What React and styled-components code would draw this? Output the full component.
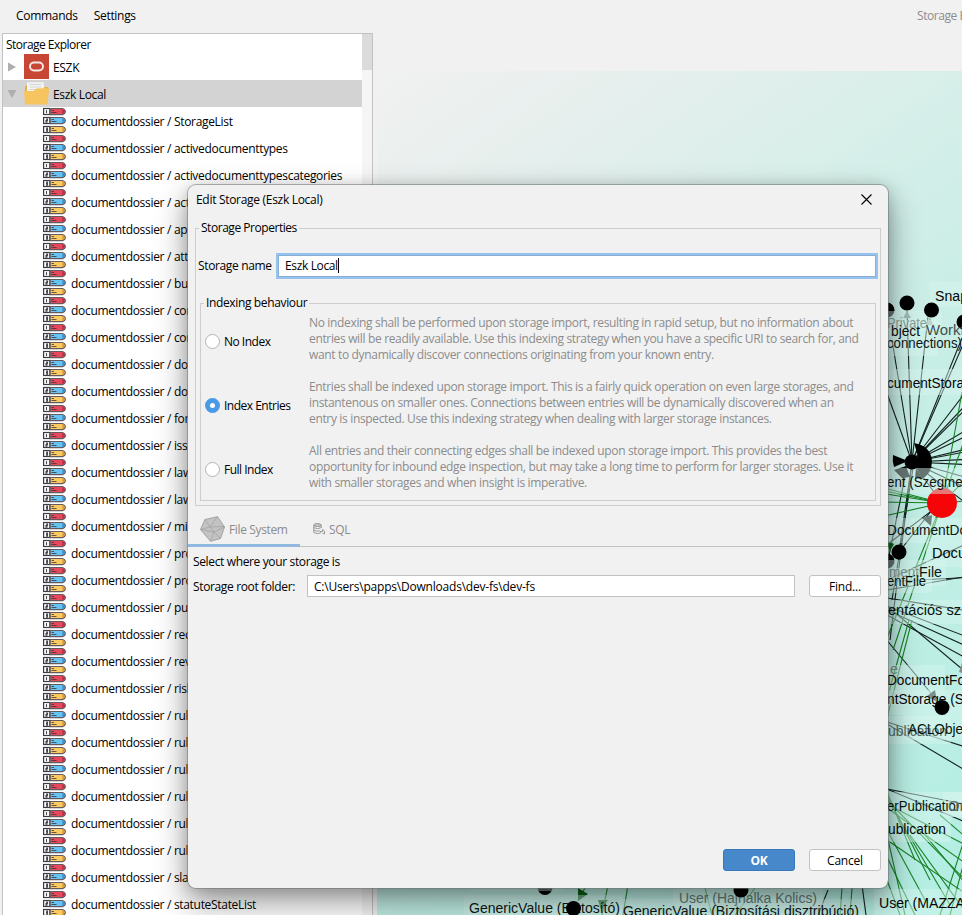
import React from 'react';
import styled, { createGlobalStyle } from 'styled-components';

const Global = createGlobalStyle`
  * { box-sizing: border-box; }
  body { margin: 0; background: #f1f1f1; overflow: hidden; }
`;

const Page = styled.div`
  position: relative;
  width: 962px;
  height: 915px;
  overflow: hidden;
  display: flex;
  flex-direction: column;
  background: #f1f1f1;
  color: #000;
  font: 12px/16px 'Open Sans', 'Noto Sans', sans-serif;
  letter-spacing: -0.36px;
  white-space: nowrap;
`;

const MenuBar = styled.header`
  height: 33px;
  flex: none;
  display: flex;
  align-items: center;
  gap: 16px;
  padding: 0 0 1px 16px;
  letter-spacing: -0.3px;
`;
const MenuItem = styled.span``;
const MenuTitle = styled.span`
  width: 45px;
  margin-left: auto;
  overflow: hidden;
  color: #8c8c8c;
  letter-spacing: -0.45px;
`;

const Workspace = styled.div`
  flex: 1;
  min-height: 0;
  display: flex;
`;
const Explorer = styled.aside`
  width: 371px;
  margin-left: 2px;
  display: flex;
  border: 1px solid #c2c2c2;
  border-bottom: 0;
  background: #fff;
  overflow: hidden;
`;
const Tree = styled.div`
  flex: 1;
  min-width: 0;
`;
const TreeHeader = styled.div`
  height: 19px;
  padding: 3px 0 0 3px;
  letter-spacing: -0.52px;
`;
const Row = styled.div`
  height: 27px;
  display: flex;
  align-items: center;
  padding-left: ${(p) => (p.$child ? 40 : 4)}px;
  gap: ${(p) => (p.$child ? 5 : 4)}px;
  background: ${(p) => (p.$selected ? '#d3d3d3' : 'transparent')};
  letter-spacing: ${(p) => (p.$child ? -0.31 : -0.33)}px;
  svg { flex: none; }
`;
const RowLabel = styled.span`
  padding-top: 2px;
`;
const Arrow = styled.svg`
  margin-right: 3px;
`;
const ScrollTrack = styled.div`
  width: 10px;
  background: #f5f5f5;
`;
const ScrollThumb = styled.div`
  height: 36px;
  background: #dbdbdb;
`;
const GraphPane = styled.main`
  flex: 1;
  min-width: 0;
  margin: 38px 0 0 4px;
  background: linear-gradient(145deg, #f1f1f1 0%, #e6efed 15%, #c9eee6 50%, #b2eee3 100%);
  overflow: hidden;
  svg { display: block; }
`;

const Dialog = styled.section`
  position: absolute;
  left: 187px;
  top: 184px;
  width: 702px;
  height: 705px;
  display: flex;
  flex-direction: column;
  background: #f1f1f1;
  background-clip: padding-box;
  border: 1px solid rgba(110, 120, 118, 0.55);
  border-radius: 9px;
  box-shadow: 0 14px 32px rgba(0, 0, 0, 0.4), 0 2px 14px rgba(0, 0, 0, 0.14);
`;
const TitleBar = styled.div`
  height: 30px;
  display: flex;
  justify-content: space-between;
  align-items: center;
  padding: 0 16px 0 8px;
  letter-spacing: -0.3px;
  svg { margin-top: -2px; }
`;
const Fieldset = styled.fieldset`
  min-width: 0;
  margin: ${(p) => (p.$inner ? '16px 0 0 0' : '5px 7px 0 7px')};
  height: ${(p) => (p.$inner ? 206 : 286)}px;
  padding: ${(p) => (p.$inner ? '0 4px' : '17px 4px 0 4px')};
  border: 1px solid #cdcdcd;
`;
const Legend = styled.legend`
  padding: 0 2px;
  margin-left: -1px;
  height: 16px;
  letter-spacing: ${(p) => (p.$inner ? -0.36 : -0.46)}px;
`;
const NameRow = styled.div`
  display: flex;
  align-items: center;
  justify-content: space-between;
  margin: 0 -2px 0 -2px;
`;
const NameInput = styled.div`
  width: 602px;
  height: 26px;
  display: flex;
  align-items: center;
  padding: 0 0 0 7px;
  background: #fff;
  border: 2px solid #97c3f0;
  outline: 1px solid #89b0d4;
  outline-offset: -3px;
  letter-spacing: -0.36px;
`;
const Caret = styled.span`
  width: 1px;
  height: 15px;
  margin-top: -1px;
  background: #000;
`;
const Options = styled.div`
  margin-top: -2px;
`;
const Option = styled.div`
  height: 64px;
  display: grid;
  grid-template-columns: 19px 85px 1fr;
  align-items: center;
  letter-spacing: -0.5px;
`;
const OptionLabel = styled.span`
  padding-top: 2px;
`;
const Radio = styled.span`
  width: 15px;
  height: 15px;
  border-radius: 50%;
  background: #fff;
  border: ${(p) => (p.$on ? '5px solid #4a9ae6' : '1px solid #b3b3b3')};
`;
const Description = styled.p`
  margin: 0;
  height: 52px;
  color: #8c8c8c;
  letter-spacing: -0.34px;
`;
const Tabs = styled.nav`
  height: 42px;
  margin-top: -1px;
  display: flex;
  border-bottom: 1px solid #c2c2c2;
  color: #8c8c8c;
`;
const Tab = styled.div`
  width: ${(p) => p.$w}px;
  height: 42px;
  padding: 9px 0 0 12px;
  display: flex;
  align-items: center;
  gap: 4px;
  border-bottom: 3px solid ${(p) => (p.$active ? '#91b9e0' : 'transparent')};
`;
const TabLabel = styled.span`
  padding-top: 2px;
`;
const TabBody = styled.div`
  flex: 1;
  padding: 7px 7px 0 5px;
`;
const FolderRow = styled.div`
  display: flex;
  align-items: center;
  margin-top: 5px;
`;
const FolderLabel = styled.span`
  width: 114px;
  padding-top: 1px;
`;
const PathInput = styled.div`
  width: 488px;
  height: 22px;
  padding: 3px 6px 0;
  border: 1px solid #c2c2c2;
  background: #fff;
  margin-right: 14px;
  letter-spacing: -0.21px;
`;
const Button = styled.button`
  width: 72px;
  height: 22px;
  padding: 1px 0 0;
  border: 1px solid ${(p) => (p.$primary ? '#3878ba' : '#c2c2c2')};
  border-radius: 3px;
  background: ${(p) => (p.$primary ? '#4688ca' : '#fff')};
  color: ${(p) => (p.$primary ? '#fff' : '#000')};
  font: ${(p) => (p.$primary ? 700 : 400)} 12px/18px 'Open Sans', sans-serif;
  letter-spacing: -0.2px;
`;
const Footer = styled.footer`
  display: flex;
  justify-content: flex-end;
  gap: 14px;
  padding: 0 7px 17px 0;
`;

const PENS = [
  ['#e8485c', '#b93147', 'M3.500 2.500v3'],
  ['#66c3f2', '#3c90d2', 'M3 2.500h1.500v1.500H3v1.500h1.500'],
  ['#fbcb62', '#dc9a36', 'M3 2.500h1.500v3H3M3 4h1.500'],
];
const PenIcon = () => (
  <svg width="23" height="27" viewBox="0 0 23 27">
    {PENS.map(([fill, edge, digit], i) => (
      <g key={fill} transform={`translate(0 ${i * 9 + 0.6})`}>
        <rect x="0.600" y="0.900" width="6.200" height="6" fill="#fff" stroke="#3b3c43" strokeWidth="1.200" />
        <path d={digit} fill="none" stroke="#45464d" strokeWidth="1.100" />
        <path d="M7.200 .9h12.300q2.800 1 2.800 3.100t-2.800 3H7.200z" fill={fill} stroke="#665a5d" strokeWidth="1.200" />
        <path d="M19.300 1.400q2.600 1 2.600 2.600t-2.600 2.500z" fill={edge} />
        <path d="M8.500 2.900h2.500M8.500 4.900h5" stroke="#343238" strokeOpacity=".75" strokeWidth="1" />
      </g>
    ))}
  </svg>
);
const OracleIcon = () => (
  <svg width="25" height="25" viewBox="0 0 25 25">
    <path d="M0 0h25v25H0z" fill="#c74634" />
    <rect x="6" y="8.500" width="13" height="8" rx="4" fill="none" stroke="#f8e9e6" strokeWidth="1.900" />
  </svg>
);
const FolderIcon = () => (
  <svg width="25" height="25" viewBox="0 0 25 25">
    <path d="M1 6q0-1.500 1.500-1.500H8v6H1z" fill="#e7b144" />
    <path d="M20 6h3q1.500 0 1.500 1.500V12H18z" fill="#e7b144" />
    <path d="M3 2q0-.8.8-.8H19q.8 0 .8.8v11H3z" fill="#f4f4f4" />
    <path d="M5.500 3.500h12M5.500 6h12M5.500 8.500h8" stroke="#d5d5d5" />
    <path d="M0 10.700q0-.8.8-.8h8.700l3.500-2.700H24q1 0 .9 1L23.800 22q-.2 1.500-1.700 1.500H2.500Q1 23.500.8 22z" fill="#f7c55f" />
  </svg>
);
const CubeIcon = () => (
  <svg width="25" height="26" viewBox="0 0 25 26">
    <path d="M5 3.500L17.500.7 24.500 11l-4 11.500-10 2.800L.5 13.500z" fill="#c3c3c3" stroke="#a2a2a2" strokeLinejoin="round" />
    <path d="M5 3.500L10 11l14.500-.5M17.500.7L10 11M.5 13.500L10 11l4 5 10.500-5M.5 13.500L14 16l6.500 6.500M14 16l-3.500 9" fill="none" stroke="#a2a2a2" strokeWidth=".8" />
  </svg>
);
const SqlIcon = () => (
  <svg width="13" height="12" viewBox="-1 0 13 12" fill="none" stroke="#999">
    <ellipse cx="4.500" cy="2" rx="3.700" ry="1.500" fill="#c8c8c8" />
    <path d="M.8 2v7.500q3.700 2.500 7.400 0M8.200 2v3M.8 4.600q3.700 2.200 7.400 0M.8 7q3 2 6 .8" />
    <path d="M7 8.500h2.500v-2l2 1.500v3l-2-.8" />
  </svg>
);
const Disclosure = ({ open }) => (
  <Arrow width="10" height="10" viewBox="0 0 10 10">
    <path d={open ? 'M.5 1h9L5 9z' : 'M1 .5L9 5 1 9.500z'} fill="#afafaf" />
  </Arrow>
);

const ENTRIES = [
  'StorageList', 'activedocumenttypes', 'activedocumenttypescategories', 'act', 'app', 'att', 'bus',
  'con', 'con', 'doc', 'doc', 'form', 'iss', 'law', 'law', 'min', 'pro', 'pro', 'pub', 'rec', 'rev',
  'risk', 'rul', 'rul', 'rul', 'rul', 'rul', 'rul', 'sla', 'statuteStateList',
];

const BLACK_EDGES = [
  [912, 462, 888, 396], [888, 396, 870, 345], [912, 462, 892, 340], [912, 462, 907, 311], [912, 462, 928, 316],
  [912, 462, 962, 338], [912, 462, 965, 340], [912, 462, 975, 380], [912, 462, 975, 395], [912, 462, 975, 400],
  [912, 462, 975, 425], [912, 462, 975, 432], [912, 462, 975, 447], [912, 462, 975, 450], [912, 462, 975, 459],
  [912, 462, 975, 465], [912, 462, 975, 480], [912, 462, 975, 492], [912, 462, 975, 510], [912, 462, 942, 503],
  [912, 462, 899, 552], [912, 462, 890, 640], [914, 462, 892, 600], [908, 462, 880, 600], [880, 550, 942, 503],
  [899, 552, 932, 510], [887, 590, 975, 575], [880, 582, 975, 577], [887, 598, 975, 612], [887, 606, 975, 640],
  [887, 615, 975, 663], [887, 610, 975, 650], [880, 632, 935, 698], [880, 600, 975, 680], [887, 722, 975, 750],
  [887, 724, 975, 776], [887, 789, 975, 806], [887, 789, 975, 826], [887, 580, 975, 540], [887, 476, 870, 490],
  [862, 885, 866, 915], [828, 890, 818, 915],
];
const GREEN_EDGES = [
  [962, 392, 942, 503], [975, 410, 942, 503], [975, 500, 942, 503], [880, 487, 942, 503], [880, 490, 942, 503],
  [880, 493, 942, 503], [880, 502, 942, 503], [880, 517, 942, 503], [942, 503, 885, 643], [942, 503, 893, 650],
  [942, 503, 975, 470], [912, 620, 887, 718], [909, 620, 885, 706], [887, 792, 915, 860],
  [887, 795, 930, 880], [887, 798, 950, 905], [887, 800, 975, 890], [887, 804, 975, 850], [887, 808, 975, 870],
  [887, 830, 925, 900], [887, 840, 975, 900], [975, 806, 940, 915], [975, 820, 950, 915], [887, 835, 905, 915],
  [887, 857, 915, 915], [887, 880, 900, 915], [910, 835, 975, 925], [940, 815, 975, 845], [925, 835, 975, 895],
  [608, 885, 602, 915], [628, 885, 623, 915], [705, 888, 712, 915], [755, 888, 735, 915], [842, 888, 840, 915],
  [852, 888, 850, 915], [585, 888, 578, 900],
];
const PLATES = [
  [930, 282, 60, 25], [880, 311, 62, 20], [880, 320, 58, 36], [880, 369, 90, 26], [880, 468, 90, 26],
  [880, 518, 90, 25], [926, 542, 50, 25], [880, 560, 66, 26], [880, 568, 52, 25], [880, 600, 90, 24],
  [870, 665, 75, 40], [880, 690, 90, 25], [903, 715, 60, 25], [875, 716, 76, 28], [880, 792, 95, 25],
  [943, 792, 32, 25], [880, 817, 71, 25], [874, 889, 100, 26], [464, 895, 158, 26], [619, 899, 244, 26],
  [673, 888, 150, 20], [470, 882, 95, 9], [960, 127, 20, 27],
];
const LABELS = [
  ['Snap', 935, 301, '#050505', 33], ['Private', 887, 328, '#8a9f9b', 40], ['bject', 891, 336, '#0a0a0a', 29],
  ['Workfl', 926, 335, '#43514e', 42], ['connections)', 887, 348, '#101514', 75], ['cumentStora', 887, 388, '#050505', 77],
  ['ent (Szegmen', 887, 487, '#101513', 83], ['DocumentDo', 887, 535, '#101513', 80], ['Docu', 932, 558, '#050505', 34],
  ['ment', 889, 577, '#7d9991', 30], ['File', 919, 577, '#101513', 23], ['entFile', 887, 586, '#07130b', 39],
  ['entációs sz', 888, 615, '#07130b', 73], ['e', 890, 674, '#788f89', 8], ['DocumentFo', 887, 685, '#050505', 78],
  ['ntStorage (S', 887, 704, '#050505', 77], ['ublication', 888, 736, '#536a65', 59], ['ACLObje', 908, 734, '#07130b', 55],
  ['erPublication', 887, 811, '#07130b', 76], ['On', 948, 811, '#5c716c', 20], ['ublication', 888, 834, '#050505', 58],
  ['User (MAZZA', 879, 908, '#050505', 86], ['GenericValue (Biztosító)', 469, 913, '#101513', 151],
  ['User (Hajnalka Kolics)', 679, 903, '#647b76', 138], ['GenericValue (Biztosítási disztribúció)', 623, 916, '#101513', 236],
];
const GraphText = styled.text`
  font: 14px 'Liberation Sans', Arial, sans-serif;
  letter-spacing: 0;
`;

const Graph = () => (
  <svg width="585" height="844" viewBox="377 71 585 844">
    <g stroke="#14201d" strokeWidth="1.100">
      {BLACK_EDGES.map(([a, b, c, d], i) => <line key={i} x1={a} y1={b} x2={c} y2={d} />)}
    </g>
    <g stroke="#158222" strokeWidth="1.100">
      {GREEN_EDGES.map(([a, b, c, d], i) => <line key={i} x1={a} y1={b} x2={c} y2={d} />)}
    </g>
    <path d="M914 443Q931 446 932 461Q932 473 922 479L917 468L918 456z" />
    <path d="M893 455l15 6-14 6q-2-6-1-12M894 470l12-4 4 11-8 1zM916 468l7 11-8-1z" />
    <path d="M907 311l4 7h-8zM930 317l3 8h-7z" fill="#71817d" />
    <path d="M885 540l9 4-4 7zM578 888l10 6-10 7zM598 900h10l-7 10z" fill="#096214" />
    <path d="M962 663l-3 9 6 2z" fill="#82918e" />
    <circle cx="942" cy="503" r="15" fill="#f50508" />
    {[[887, 310], [964, 322], [887, 561], [545, 887.5]].map(([x, y]) => (
      <circle key={`${x}-${y}`} cx={x} cy={y} r="7.500" />
    ))}
    {PLATES.map(([x, y, w, h], i) => (
      <rect key={i} x={x} y={y} width={w} height={h} rx="2" fill="#d5f5ef" fillOpacity=".48" />
    ))}
    <path d="M932 515l-1 11-9-8z" fill="#6f807b" />
    <path d="M937 702l-2-12-8 6z" fill="#7c8e89" />
    <circle cx="907" cy="303" r="7.500" />
    <circle cx="931.500" cy="310" r="7.500" />
    <circle cx="899" cy="552" r="7.500" />
    <circle cx="912" cy="462" r="7.500" />
    <circle cx="942" cy="707.500" r="7.500" />
    {LABELS.map(([t, x, y, fill, w], i) => (
      <GraphText key={i} x={x} y={y} fill={fill} textLength={w} lengthAdjust="spacingAndGlyphs">{t}</GraphText>
    ))}
    <circle cx="573.500" cy="908.500" r="7.500" />
    <circle cx="741" cy="890" r="7.500" />
  </svg>
);

const OPTIONS = [
  ['No Index', false, [
    'No indexing shall be performed upon storage import, resulting in rapid setup, but no information about',
    'entries will be readily available. Use this indexing strategy when you have a specific URI to search for, and',
    'want to dynamically discover connections originating from your known entry.']],
  ['Index Entries', true, [
    'Entries shall be indexed upon storage import. This is a fairly quick operation on even large storages, and',
    'instantenous on smaller ones. Connections between entries will be dynamically discovered when an',
    'entry is inspected. Use this indexing strategy when dealing with larger storage instances.']],
  ['Full Index', false, [
    'All entries and their connecting edges shall be indexed upon storage import. This provides the best',
    'opportunity for inbound edge inspection, but may take a long time to perform for larger storages. Use it',
    'with smaller storages and when insight is imperative.']],
];

export default function App() {
  return (
    <Page>
      <Global />
      <MenuBar>
        <MenuItem>Commands</MenuItem>
        <MenuItem>Settings</MenuItem>
        <MenuTitle>Storage Explorer</MenuTitle>
      </MenuBar>
      <Workspace>
        <Explorer>
          <Tree>
            <TreeHeader>Storage Explorer</TreeHeader>
            <Row><Disclosure /><OracleIcon /><RowLabel>ESZK</RowLabel></Row>
            <Row $selected><Disclosure open /><FolderIcon /><RowLabel>Eszk Local</RowLabel></Row>
            {ENTRIES.map((name, i) => (
              <Row key={i} $child><PenIcon /><RowLabel>documentdossier / {name}</RowLabel></Row>
            ))}
          </Tree>
          <ScrollTrack><ScrollThumb /></ScrollTrack>
        </Explorer>
        <GraphPane><Graph /></GraphPane>
      </Workspace>
      <Dialog>
        <TitleBar>
          Edit Storage (Eszk Local)
          <svg width="11" height="11" viewBox="0 0 11 11"><path d="M.5 .5l10 10M10.500 .5l-10 10" stroke="#000" strokeWidth="1.100" /></svg>
        </TitleBar>
        <Fieldset>
          <Legend>Storage Properties</Legend>
          <NameRow>
            Storage name
            <NameInput>Eszk Local<Caret /></NameInput>
          </NameRow>
          <Fieldset $inner>
            <Legend $inner>Indexing behaviour</Legend>
            <Options>
              {OPTIONS.map(([label, on, lines]) => (
                <Option key={label}>
                  <Radio $on={on} />
                  <OptionLabel>{label}</OptionLabel>
                  <Description>{lines.map((l) => <div key={l}>{l}</div>)}</Description>
                </Option>
              ))}
            </Options>
          </Fieldset>
        </Fieldset>
        <Tabs>
          <Tab $active $w={112}><CubeIcon /><TabLabel>File System</TabLabel></Tab>
          <Tab $w={70}><SqlIcon /><TabLabel>SQL</TabLabel></Tab>
        </Tabs>
        <TabBody>
          <div>Select where your storage is</div>
          <FolderRow>
            <FolderLabel>Storage root folder:</FolderLabel>
            <PathInput>C:\Users\papps\Downloads\dev-fs\dev-fs</PathInput>
            <Button>Find...</Button>
          </FolderRow>
        </TabBody>
        <Footer>
          <Button $primary>OK</Button>
          <Button>Cancel</Button>
        </Footer>
      </Dialog>
    </Page>
  );
}
